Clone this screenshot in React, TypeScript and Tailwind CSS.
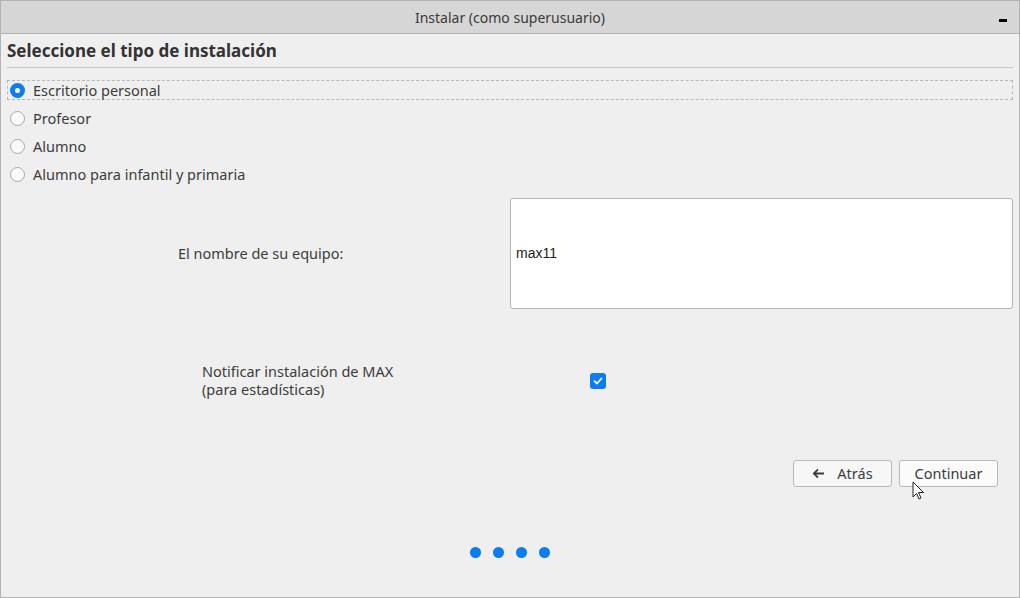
import React from "react";

const font = { fontFamily: '"Noto Sans", "Open Sans", sans-serif' };

function Radio({ checked, label, focus }: { checked?: boolean; label: string; focus?: boolean }) {
  return (
    <div
      className={`flex h-[20px] items-center pl-[2px] ${focus ? "border border-dashed border-[#b8b8b8]" : "border border-transparent"}`}
    >
      {checked ? (
        <span className="flex h-[15px] w-[15px] shrink-0 items-center justify-center rounded-full bg-[#0b7cf2]">
          <span className="h-[5px] w-[5px] rounded-full bg-white" />
        </span>
      ) : (
        <span className="h-[15px] w-[15px] shrink-0 rounded-full border border-[#a9a9a9] bg-[#fafafa]" />
      )}
      <span className="ml-[8px] text-[14.5px] leading-[18px] text-[#3c3c3c]">{label}</span>
    </div>
  );
}

export default function App() {
  return (
    <div
      className="flex h-[598px] w-[1020px] flex-col border border-[#b3b3b3] bg-[#efefef] text-[#3c3c3c]"
      style={font}
    >
      <div className="relative flex h-[33px] shrink-0 items-center justify-center border-b border-[#b3b3b3] bg-[#d6d6d6]">
        <span className="text-[14px] text-[#3a3a3a]">Instalar (como superusuario)</span>
        <span className="absolute right-[12px] top-[18px] h-[3px] w-[8px] bg-black" />
      </div>

      <div className="flex flex-1 flex-col px-[6px]">
        <div className="flex h-[34px] items-center border-b border-[#c4c4c4] pt-[1px]">
          <h1 className="text-[17px] font-bold text-[#333]">Seleccione el tipo de instalación</h1>
        </div>

        <div className="mt-[12px] flex flex-col gap-[8px]">
          <Radio checked focus label="Escritorio personal" />
          <Radio label="Profesor" />
          <Radio label="Alumno" />
          <Radio label="Alumno para infantil y primaria" />
        </div>

        <div className="mt-[14px] flex items-center">
          <div className="w-[503px] pl-[171px] text-[14.5px]">El nombre de su equipo:</div>
          <div className="flex h-[111px] flex-1 items-center rounded-[3px] border border-[#b5b5b5] bg-white pl-[5px]">
            <span className="text-[14px] text-[#222]" style={{ fontFamily: '"Liberation Sans", sans-serif' }}>
              max11
            </span>
          </div>
        </div>

        <div className="mt-[54px] flex items-center">
          <div className="w-[583px] pl-[195px] text-[14.5px] leading-[17.5px]">
            <div>Notificar instalación de MAX</div>
            <div>(para estadísticas)</div>
          </div>
          <span className="flex h-[16px] w-[16px] items-center justify-center rounded-[3px] bg-[#0b7cf2]">
            <svg width="10" height="10" viewBox="0 0 10 10" fill="none">
              <path d="M1.5 5.2 L4 7.5 L8.5 2.5" stroke="white" strokeWidth="1.8" strokeLinecap="round" strokeLinejoin="round" />
            </svg>
          </span>
        </div>

        <div className="mt-[62px] flex justify-end gap-[7px] pr-[15px]">
          <button className="flex h-[27px] w-[99px] items-center justify-center gap-[12px] rounded-[3px] border border-[#b8b8b8] bg-[#f7f7f7] text-[14.5px] text-[#3c3c3c]">
            <svg width="13" height="11" viewBox="0 0 13 11" fill="none">
              <path d="M12 5.5 H2 M6 1.3 L1.8 5.5 L6 9.7" stroke="#3c3c3c" strokeWidth="1.8" />
            </svg>
            Atrás
          </button>
          <button className="relative flex h-[27px] w-[99px] items-center justify-center rounded-[3px] border border-[#b8b8b8] bg-[#fbfbfb] text-[14.5px] text-[#3c3c3c]">
            Continuar
            <svg className="absolute left-[12px] top-[20px]" width="14" height="20" viewBox="0 0 14 20">
              <path d="M1 1 L1 16 L4.5 12.5 L7 18 L9 17 L6.5 11.5 L11.5 11.5 Z" fill="white" stroke="#222" strokeWidth="1" />
            </svg>
          </button>
        </div>

        <div className="mt-[60px] flex justify-center gap-[12px]">
          <span className="h-[11px] w-[11px] rounded-full bg-[#0b7cf2]" />
          <span className="h-[11px] w-[11px] rounded-full bg-[#0b7cf2]" />
          <span className="h-[11px] w-[11px] rounded-full bg-[#0b7cf2]" />
          <span className="h-[11px] w-[11px] rounded-full bg-[#0b7cf2]" />
        </div>
      </div>
    </div>
  );
}
